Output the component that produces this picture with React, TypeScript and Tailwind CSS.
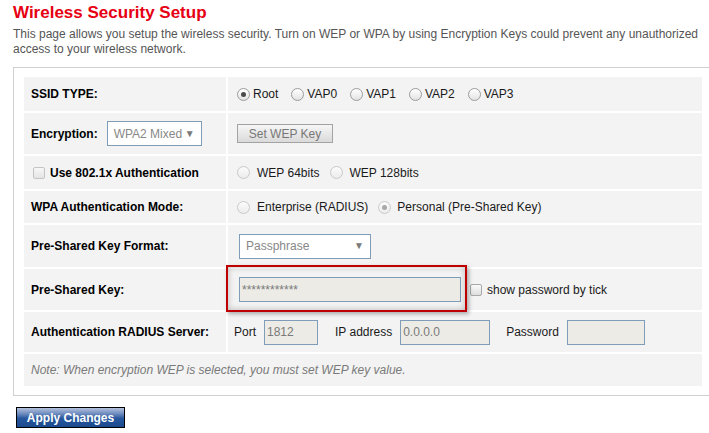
import React from 'react';

function Radio({ checked = false, disabled = false }: { checked?: boolean; disabled?: boolean }) {
  return (
    <span
      className={`inline-flex h-[13px] w-[13px] shrink-0 items-center justify-center rounded-full border ${
        disabled
          ? 'border-[#c9c9c9] bg-[linear-gradient(#fbfbfb,#ececec)]'
          : 'border-[#9c9c9c] bg-[linear-gradient(#ffffff,#e3e3e3)]'
      }`}
    >
      {checked && (
        <span className={`h-[5px] w-[5px] rounded-full ${disabled ? 'bg-[#a9a9a9]' : 'bg-[#4a4a4a]'}`} />
      )}
    </span>
  );
}

function Checkbox({ disabled = false }: { disabled?: boolean }) {
  return (
    <span
      className={`inline-block h-[12px] w-[12px] shrink-0 rounded-[2px] border ${
        disabled
          ? 'border-[#c4c4c4] bg-[linear-gradient(#f7f7f7,#e4e4e4)]'
          : 'border-[#a8a8a8] bg-[linear-gradient(#fafafa,#dedede)]'
      }`}
    />
  );
}

function Select({ value, className }: { value: string; className: string }) {
  return (
    <div
      className={`flex items-center justify-between border border-[#7f9db9] bg-white pl-[6px] pr-[6px] text-[12px] text-[#888] ${className}`}
    >
      <span>{value}</span>
      <span className="text-[10px] leading-none text-[#7a7a7a]">▼</span>
    </div>
  );
}

function Field({ value, className }: { value: string; className: string }) {
  return (
    <div
      className={`flex items-center border border-[#7f9db9] bg-[#ecebe6] pl-[2px] text-[12px] text-[#7a7a7a] ${className}`}
    >
      {value}
    </div>
  );
}

function Row({ label, height, children }: { label: React.ReactNode; height: string; children?: React.ReactNode }) {
  return (
    <>
      <div className={`flex items-center bg-[#f3f3f3] pl-[7px] text-[12px] font-bold text-black ${height}`}>
        {label}
      </div>
      <div className={`flex items-center bg-[#f3f3f3] pl-[9px] text-[12px] text-[#1a1a1a] ${height}`}>
        {children}
      </div>
    </>
  );
}

export default function App() {
  const vaps = ['Root', 'VAP0', 'VAP1', 'VAP2', 'VAP3'];

  return (
    <div className="relative h-[433px] w-[709px] overflow-hidden bg-white font-['Liberation_Sans',Arial,sans-serif]">
      <div className="pl-[13px] pt-[3px]">
        <h1 className="text-[17px] font-bold leading-[20px] text-[#e60012]">Wireless Security Setup</h1>
        <p className="mt-[4px] text-[12px] leading-[15px] text-[#555]">
          This page allows you setup the wireless security. Turn on WEP or WPA by using Encryption Keys could prevent any unauthorized
          <br />
          access to your wireless network.
        </p>

        <div className="mt-[10px] w-[700px] border border-[#d0d0d0] py-[9px] pl-[10px]">
          <div className="grid grid-cols-[202px_474px] gap-[2px]">
            <Row label="SSID TYPE:" height="h-[34px]">
              <div className="flex items-center gap-[13px]">
                {vaps.map((v, i) => (
                  <span key={v} className="flex items-center gap-[3px]">
                    <Radio checked={i === 0} />
                    <span>{v}</span>
                  </span>
                ))}
              </div>
            </Row>

            <Row
              height="h-[41px]"
              label={
                <span className="flex items-center">
                  Encryption:
                  <Select value="WPA2 Mixed" className="ml-[9px] h-[25px] w-[95px] font-normal" />
                </span>
              }
            >
              <button className="h-[19px] w-[96px] border border-[#a3a3a3] bg-[linear-gradient(#f6f6f6,#dadada)] text-[12px] text-[#777]">
                Set WEP Key
              </button>
            </Row>

            <Row
              height="h-[33px]"
              label={
                <span className="flex items-center gap-[5px] pl-[2px]">
                  <Checkbox disabled />
                  Use 802.1x Authentication
                </span>
              }
            >
              <span className="flex items-center gap-[7px]">
                <Radio disabled />
                WEP 64bits
              </span>
              <span className="ml-[11px] flex items-center gap-[6px]">
                <Radio disabled />
                WEP 128bits
              </span>
            </Row>

            <Row label="WPA Authentication Mode:" height="h-[32px]">
              <span className="flex items-center gap-[7px]">
                <Radio disabled />
                Enterprise (RADIUS)
              </span>
              <span className="ml-[10px] flex items-center gap-[6px]">
                <Radio checked disabled />
                Personal (Pre-Shared Key)
              </span>
            </Row>

            <Row label="Pre-Shared Key Format:" height="h-[42px]">
              <Select value="Passphrase" className="ml-[2px] h-[25px] w-[132px]" />
            </Row>

            <Row label="Pre-Shared Key:" height="h-[41px]">
              <Field value="************" className="ml-[2px] h-[25px] w-[222px]" />
              <span className="ml-[9px] flex items-center gap-[5px]">
                <Checkbox />
                show password by tick
              </span>
            </Row>

            <Row label="Authentication RADIUS Server:" height="h-[40px]">
              <span className="-ml-[3px]">Port</span>
              <Field value="1812" className="ml-[8px] h-[25px] w-[54px]" />
              <span className="ml-[17px]">IP address</span>
              <Field value="0.0.0.0" className="ml-[8px] h-[25px] w-[90px]" />
              <span className="ml-[16px]">Password</span>
              <Field value="" className="ml-[8px] h-[25px] w-[78px]" />
            </Row>

            <div className="col-span-2 flex h-[32px] items-center bg-[#f3f3f3] pl-[7px] text-[12px] italic text-[#7a7a7a]">
              Note: When encryption WEP is selected, you must set WEP key value.
            </div>
          </div>
        </div>

        <button className="ml-[3px] mt-[11px] h-[21px] w-[109px] border border-black bg-[linear-gradient(#b4c1dc_0%,#6e8cbf_30%,#27579d_55%,#1b4a8e_100%)] text-[12px] font-bold text-white">
          Apply Changes
        </button>
      </div>

      <div className="pointer-events-none absolute left-[226px] top-[265px] h-[47px] w-[241px] border-2 border-[#c00000] shadow-[inset_0_0_6px_rgba(0,0,0,0.25),2px_2px_4px_rgba(0,0,0,0.3)]" />
    </div>
  );
}
